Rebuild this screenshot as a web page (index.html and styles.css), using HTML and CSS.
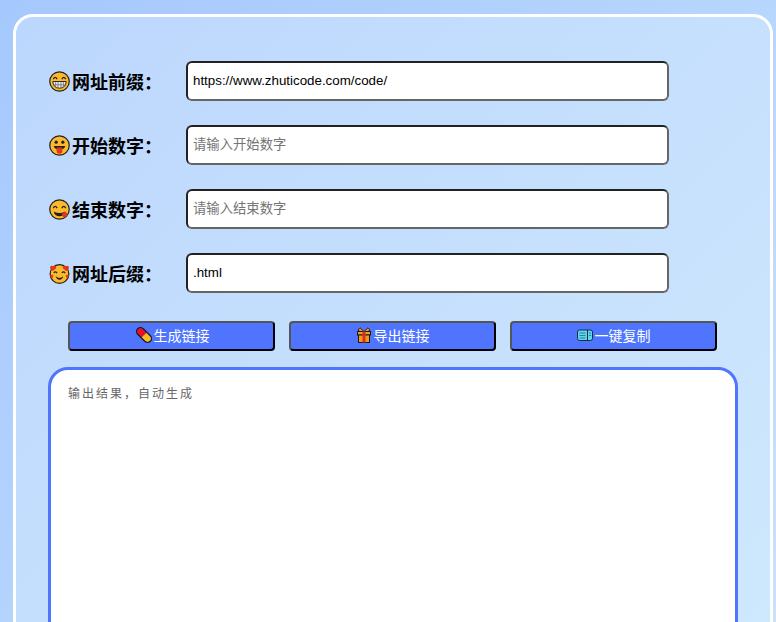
FILE: index.html
```html
<!DOCTYPE html>
<html lang="zh-CN">
<head>
<meta charset="utf-8">
<title>网址批量生成</title>
<link rel="stylesheet" href="styles.css">
</head>
<body>
<main class="card">
  <div class="row">
    <label class="label" for="a">
      <svg class="emoji" viewBox="0 0 22 22"><circle cx="11" cy="11" r="10.200" fill="#fbb92b" stroke="#222" stroke-width="1.300"/><path d="M4.500 8.500q2-3.500 4 0M13.500 8.500q2-3.500 4 0" fill="none" stroke="#222" stroke-width="1.400"/><path d="M4 11h14q-.5 7-7 7t-7-7z" fill="#eee" stroke="#222" stroke-width="1"/><path d="M4.500 14.500h13M7 11.500v5.500M9.500 11.500v6.500M12.500 11.500v6.500M15 11.500v5.500" stroke="#666" stroke-width=".8" fill="none"/></svg>
      <span>网址前缀：</span>
    </label>
    <input class="field" id="a" value="https://www.zhuticode.com/code/">
  </div>
  <div class="row">
    <label class="label" for="b">
      <svg class="emoji" viewBox="0 0 22 22"><circle cx="11" cy="11" r="10.200" fill="#fbb92b" stroke="#222" stroke-width="1.300"/><circle cx="7.500" cy="7.500" r="1.700" fill="#222"/><circle cx="14.500" cy="7.500" r="1.700" fill="#222"/><path d="M5 11.500h12q-.5 3-3 3.500H8q-2.500-.5-3-3.500z" fill="#222"/><path d="M8 13h6v5q-3 3.500-6 0z" fill="#e5361c"/></svg>
      <span>开始数字：</span>
    </label>
    <input class="field" id="b" placeholder="请输入开始数字">
  </div>
  <div class="row">
    <label class="label" for="c">
      <svg class="emoji" viewBox="0 0 22 22"><circle cx="11" cy="11" r="10.200" fill="#fbb92b" stroke="#222" stroke-width="1.300"/><path d="M4.500 9.500q2-3.500 4 0M13.500 9.500q2-3.500 4 0" fill="none" stroke="#222" stroke-width="1.400"/><path d="M5 13q6 3.500 12 0q-1 5-6 5t-6-5z" fill="#222"/><path d="M13 16l4-3 2.500 2.500q-1 4-4.500 3.500z" fill="#e5361c"/></svg>
      <span>结束数字：</span>
    </label>
    <input class="field" id="c" placeholder="请输入结束数字">
  </div>
  <div class="row">
    <label class="label" for="d">
      <svg class="emoji" viewBox="0 0 22 22"><circle cx="11" cy="11.500" r="9.800" fill="#fbb92b" stroke="#222" stroke-width="1.300"/><path d="M5 10.500q1.500-2.500 3.500 0M13.500 10.500q1.500-2.500 3.500 0" fill="none" stroke="#222" stroke-width="1.300"/><path d="M7 14q4 3.500 8 0q-1 3.500-4 3.500T7 14z" fill="#222"/><path d="M1 5.500q0-2.500 2-2.500 1 0 1.500 1Q5 3 6 3q2 0 1.500 2.500L4 8.500z" fill="#e5361c"/><path d="M21 5.500q0-2.500-2-2.500-1 0-1.500 1Q17 3 16 3q-2 0-1.500 2.500L18 8.500z" fill="#e5361c"/><path d="M1 13.500q.5-1.500 2-1 1-.5 1.500 1L3 16.500z" fill="#e5361c"/><path d="M21 13.500q-.5-1.500-2-1-1-.5-1.500 1l1.500 3z" fill="#e5361c"/></svg>
      <span>网址后缀：</span>
    </label>
    <input class="field" id="d" value=".html">
  </div>
  <div class="actions">
    <button class="btn btn-pill" type="button">
      <svg class="btn-icon" viewBox="0 0 16 16"><g transform="rotate(45 8 8)"><rect x="-1.500" y="3.500" width="19" height="9" rx="4.500" fill="#1a1a1a"/><path d="M8 4.700H3a3.300 3.300 0 0 0 0 6.600h5z" fill="#e8112d"/><path d="M8 4.700h5a3.300 3.300 0 0 1 0 6.600H8z" fill="#fbb92b"/></g></svg>
      <span>生成链接</span>
    </button>
    <button class="btn" type="button">
      <svg class="btn-icon" viewBox="0 0 16 16"><path d="M8 4.500 4 .8 2 3l2 1.500zM8 4.500 12 .8 14 3l-2 1.500z" fill="#f39a1e" stroke="#1a1a1a" stroke-width=".9"/><rect x="1.500" y="4.500" width="13" height="3.500" fill="#f39a1e" stroke="#1a1a1a"/><rect x="2.500" y="8" width="11" height="7.500" fill="#f39a1e" stroke="#1a1a1a"/><path d="M8 4.500v11" stroke="#d8321e" stroke-width="3"/></svg>
      <span>导出链接</span>
    </button>
    <button class="btn" type="button">
      <svg class="btn-icon wide" viewBox="0 0 16 12"><rect x=".5" y="1" width="15" height="10.500" rx="2" fill="#5fd6e8" stroke="#1e2a44"/><path d="M10.500 1v10.500" stroke="#1e2a44"/><path d="M2.500 4h6M2.500 6.500h6M2.500 9h6M12 4h2M12 6.500h2" stroke="#2a7fb0"/></svg>
      <span>一键复制</span>
    </button>
  </div>
  <textarea class="output" placeholder="输出结果，自动生成"></textarea>
</main>
</body>
</html>
```
FILE: styles.css
```css
* { box-sizing: border-box; }
html, body { height: 622px; overflow: hidden; }
body {
  margin: 0;
  padding: 14px 3px 0 13px;
  background: linear-gradient(135deg, #a5c8fe, #c6e2fd);
  font-family: "Liberation Sans", "Noto Sans CJK SC", sans-serif;
}
.card {
  height: 700px;
  padding: 44px 32px 0;
  border: 3px solid #fff;
  border-radius: 20px;
  background: linear-gradient(135deg, #bcd7fd, #cfe9fd);
}
.row {
  display: flex;
  align-items: center;
  height: 40px;
  margin-bottom: 24px;
}
.label {
  display: flex;
  align-items: center;
  gap: 2px;
  width: 138px;
  flex: none;
  padding-left: 1px;
  color: #000;
  font-size: 18px;
  font-weight: 700;
}
.emoji { width: 21px; height: 21px; flex: none; }
.field {
  width: 483px;
  height: 40px;
  padding: 0 5px 2px;
  border: 2px solid;
  border-color: #222 #666 #666 #222;
  border-radius: 6px;
  background: #fff;
  color: #000;
  font-family: inherit;
  font-size: 13.333px;
  outline: none;
}
.field::placeholder { color: #757575; opacity: 1; }
.actions {
  display: flex;
  gap: 14px;
  margin: 28px 0 16px;
  padding-left: 20px;
}
.btn {
  display: flex;
  align-items: center;
  justify-content: center;
  gap: 2px;
  width: 207px;
  height: 30px;
  padding: 0 0 2px;
  border: 2px solid;
  border-color: #555 #000 #000 #555;
  border-radius: 4px;
  background: #4f75ff;
  color: #fff;
  font-family: inherit;
  font-size: 14px;
}
.btn-pill { padding-left: 2px; }
.btn-icon { width: 16px; height: 16px; flex: none; }
.btn-icon.wide { height: 12px; }
.output {
  display: block;
  width: 690px;
  height: 400px;
  padding: 14px 17px;
  border: 3px solid #4f75ff;
  border-radius: 20px;
  background: #fff;
  font-family: inherit;
  font-size: 12px;
  letter-spacing: 2px;
  outline: none;
  resize: none;
}
.output::placeholder { color: #666; opacity: 1; }
```
